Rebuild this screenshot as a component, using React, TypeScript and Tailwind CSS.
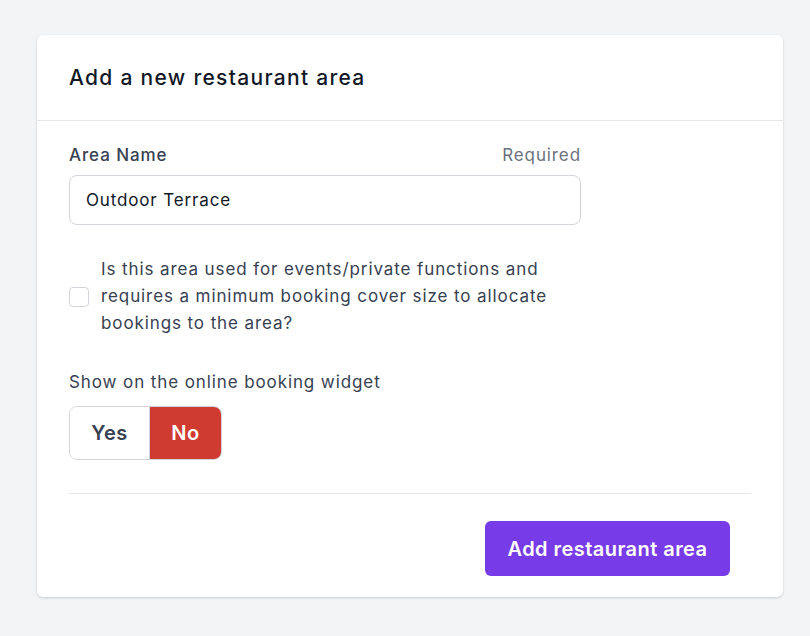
export default function App() {
  return (
    <div className="min-h-screen bg-[#f3f4f6] pt-[35px] pl-[37px] font-['Inter',sans-serif]">
      <div className="w-[746px] rounded-md bg-white shadow-[0_1px_3px_rgba(0,0,0,0.12),0_1px_2px_rgba(0,0,0,0.06)]">
        <div className="border-b border-[#e5e7eb] px-8 pt-[29px] pb-7">
          <h2 className="text-[21px] leading-7 font-medium tracking-[1.3px] text-[#111827]">Add a new restaurant area</h2>
        </div>
        <div className="px-8 pt-[22px] pb-[21px]">
          <div className="w-[512px]">
            <div className="flex items-center justify-between text-[17px] leading-6 tracking-[0.9px]">
              <label className="font-medium text-[#374151]">Area Name</label>
              <span className="text-[#6b7280]">Required</span>
            </div>
            <input
              defaultValue="Outdoor Terrace"
              className="mt-2 h-[50px] w-full rounded-lg border border-[#d1d5db] px-4 text-[17px] tracking-[0.85px] text-[#111827] outline-none"
            />
          </div>
          <label className="mt-[31px] flex w-[512px] items-center gap-3">
            <span className="h-5 w-5 shrink-0 rounded border border-[#d1d5db] bg-white" />
            <span className="text-[17px] leading-[27px] tracking-[0.9px] text-[#374151]">
              Is this area used for events/private functions and requires a minimum booking cover size to allocate bookings to the area?
            </span>
          </label>
          <div className="mt-[33px] text-[17px] leading-6 tracking-[0.9px] text-[#374151]">Show on the online booking widget</div>
          <div className="mt-3 flex h-[54px] w-[153px] overflow-hidden rounded-lg border border-[#d1d5db]">
            <button className="w-[80px] border-r border-[#d1d5db] bg-white text-[20px] font-semibold tracking-[0.5px] text-[#374151]">Yes</button>
            <button className="flex-1 bg-[#cf3a31] text-[20px] font-semibold tracking-[0.5px] text-white">No</button>
          </div>
          <div className="mt-[33px] border-t border-[#e5e7eb]" />
          <div className="mt-[27px] flex justify-end pr-[21px]">
            <button className="h-[55px] w-[245px] rounded-md bg-[#773ce8] text-[20px] font-semibold tracking-[0.45px] text-white">
              Add restaurant area
            </button>
          </div>
        </div>
      </div>
    </div>
  );
}
